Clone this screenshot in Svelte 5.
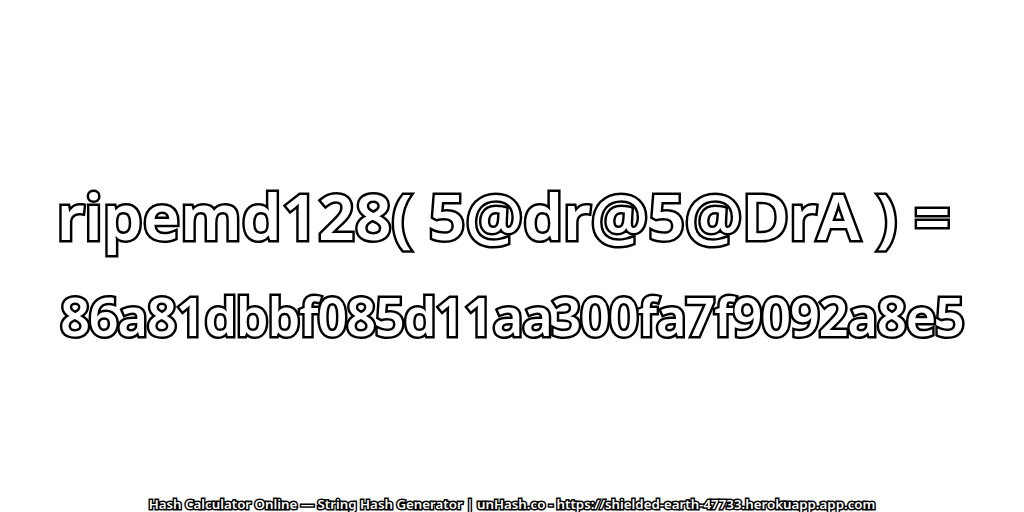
<script>
	const title = 'ripemd128( 5@dr@5@DrA ) = ';
	const hash = '86a81dbbf085d11aa300fa7f9092a8e5';
	const footer = 'Hash Calculator Online — String Hash Generator | unHash.co - https://shielded-earth-47733.herokuapp.app.com';
</script>

<main class="page">
	<div class="result">
		<h1>{title}</h1>
		<p class="hash">{hash}</p>
	</div>
	<footer>{footer}</footer>
</main>

<style>
	:global(body) {
		margin: 0;
		background: #fff;
	}

	.page {
		height: 512px;
		display: flex;
		flex-direction: column;
		align-items: center;
		font-family: "Noto Sans", "Open Sans", sans-serif;
		color: #fff;
		overflow: hidden;
	}

	.result {
		flex: 1;
		display: flex;
		flex-direction: column;
		align-items: center;
		padding-top: 173px;
		white-space: pre;
	}

	h1, .hash {
		margin: 0;
		font-weight: 600;
		-webkit-text-stroke: 5px #000;
		paint-order: stroke fill;
	}

	h1 {
		font-size: 64px;
		line-height: 86px;
	}

	.hash {
		font-size: 52px;
		letter-spacing: -1px;
		line-height: 66px;
		margin-top: 24px;
	}

	footer {
		font-size: 13.3px;
		font-weight: 600;
		line-height: 16px;
		-webkit-text-stroke: 3px #000;
		paint-order: stroke fill;
		white-space: pre;
	}
</style>
